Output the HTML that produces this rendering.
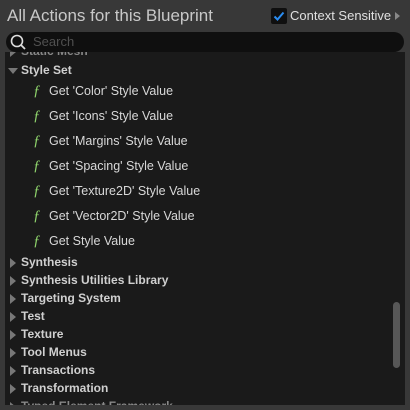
<!DOCTYPE html><html><head><style>
body{margin:0;width:410px;height:410px;background:#383838;font-family:"Liberation Sans",sans-serif;overflow:hidden;position:relative}
.t{position:absolute;left:7px;top:6px;font-size:17px;color:#c8c8c8}
.cb{position:absolute;left:271px;top:8px;width:16px;height:16px;background:#0f0f0f;border-radius:2px}
.cs{position:absolute;left:290px;top:8px;font-size:13px;color:#e0e0e0}
.ar{position:absolute;left:395px;top:12px;width:0;height:0;border-left:5px solid #888;border-top:4px solid transparent;border-bottom:4px solid transparent}
.sb{position:absolute;left:6px;top:32px;width:398px;height:20px;background:#0f0f0f;border-radius:10px}
.sb span{position:absolute;left:27px;top:2px;font-size:13px;color:#505050}
.p{position:absolute;left:5px;top:52px;width:400px;height:353px;background:#1a1a1a;overflow:hidden}
.r{position:absolute;font-size:12px;color:#d0d0d0;white-space:nowrap}
.c{left:16px;font-weight:bold}
.c:before{content:"";position:absolute;left:-11px;top:3px;border-left:6px solid #777;border-top:5px solid transparent;border-bottom:5px solid transparent}
.o:before{left:-13px;top:5px;border-top:6px solid #777;border-left:5px solid transparent;border-right:5px solid transparent;border-bottom:0}
.f{left:44px;font-size:12.5px;color:#d8d8d8}
.f i{position:absolute;left:-16px;top:-1px;color:#8fd46c;font-family:"Liberation Serif",serif;font-size:15px}
.sc{position:absolute;left:393px;top:302px;width:7px;height:66px;background:#575757;border-radius:4px}
</style></head><body>
<div class="t">All Actions for this Blueprint</div>
<div class="cb"><svg width="16" height="16"><path d="M3.5 8.5 L6.5 11.5 L12.5 4.5" stroke="#2a8cf0" stroke-width="2" fill="none"/></svg></div>
<div class="cs">Context Sensitive</div><div class="ar"></div>
<div class="sb"><svg style="position:absolute;left:3px;top:1px" width="18" height="18"><circle cx="8" cy="8" r="5.5" stroke="#ddd" stroke-width="1.6" fill="none"/><path d="M12 12 L16 16" stroke="#ddd" stroke-width="1.8"/></svg><span>Search</span></div>
<div class="p">
<div class="r c" style="top:-8px;color:#888">Static Mesh</div>
<div class="r c o" style="top:11px">Style Set</div>
<div class="r f" style="top:32px"><i>ƒ</i>Get 'Color' Style Value</div>
<div class="r f" style="top:57px"><i>ƒ</i>Get 'Icons' Style Value</div>
<div class="r f" style="top:82px"><i>ƒ</i>Get 'Margins' Style Value</div>
<div class="r f" style="top:107px"><i>ƒ</i>Get 'Spacing' Style Value</div>
<div class="r f" style="top:132px"><i>ƒ</i>Get 'Texture2D' Style Value</div>
<div class="r f" style="top:157px"><i>ƒ</i>Get 'Vector2D' Style Value</div>
<div class="r f" style="top:182px"><i>ƒ</i>Get Style Value</div>
<div class="r c" style="top:203px">Synthesis</div>
<div class="r c" style="top:221px">Synthesis Utilities Library</div>
<div class="r c" style="top:239px">Targeting System</div>
<div class="r c" style="top:257px">Test</div>
<div class="r c" style="top:275px">Texture</div>
<div class="r c" style="top:293px">Tool Menus</div>
<div class="r c" style="top:311px">Transactions</div>
<div class="r c" style="top:329px">Transformation</div>
<div class="r c" style="top:347px;color:#888">Typed Element Framework</div>
</div>
<div class="sc"></div>
</body></html>
